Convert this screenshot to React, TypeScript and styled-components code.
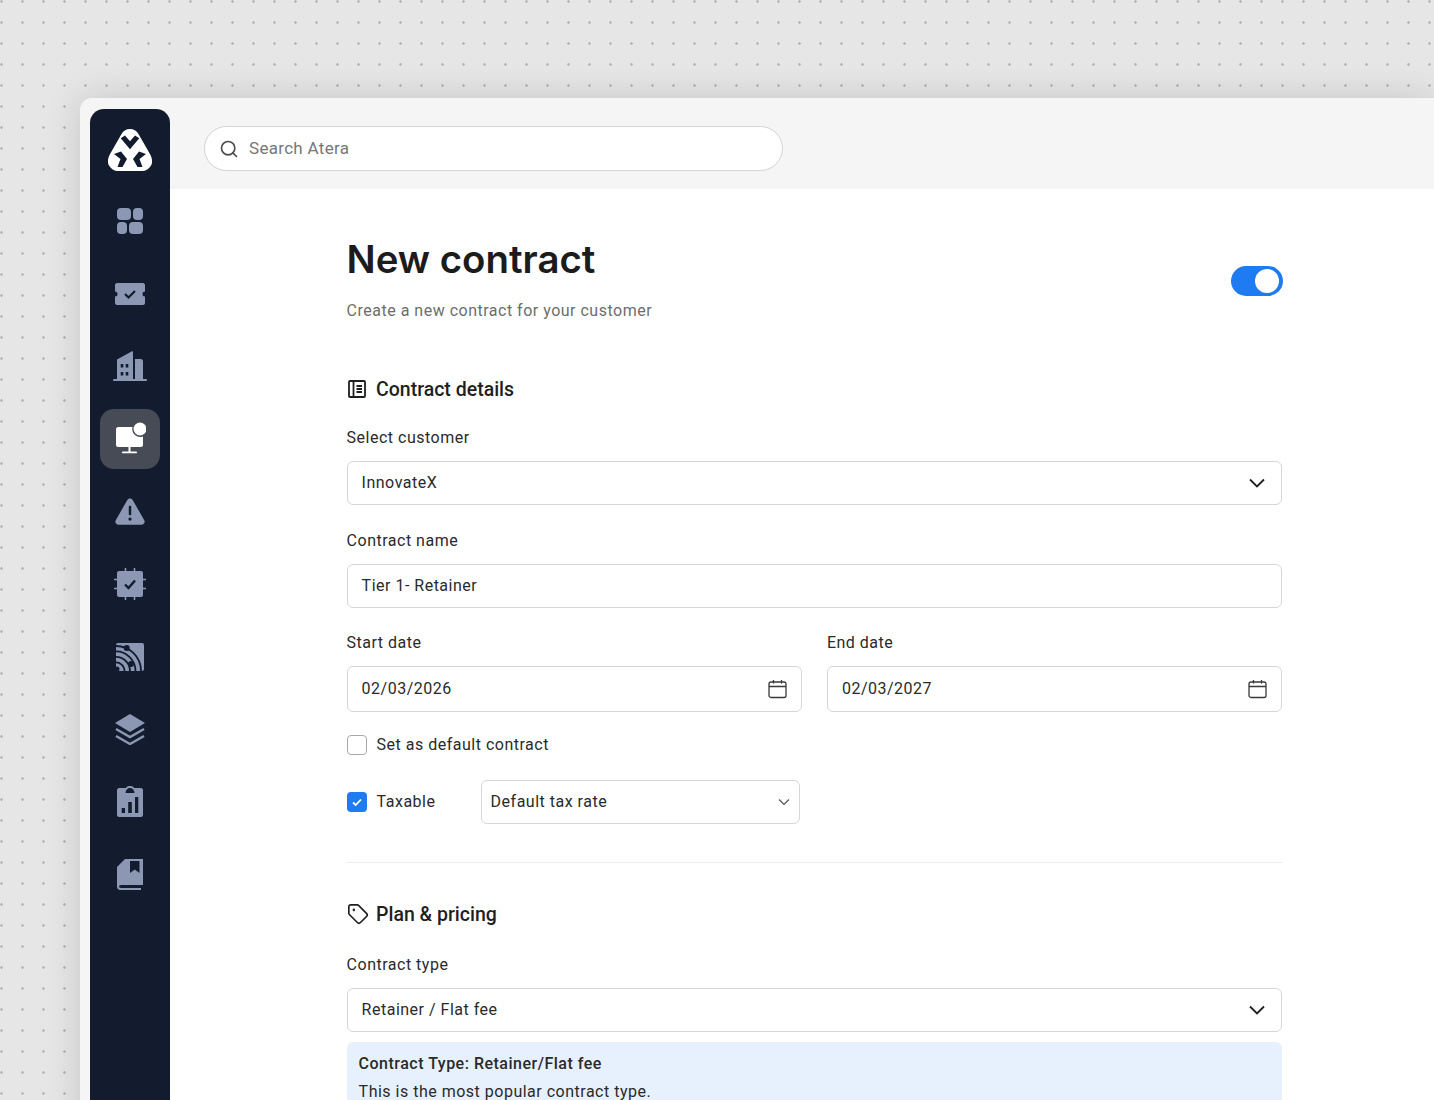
import styled, { createGlobalStyle } from 'styled-components';
import { Search, Tag } from 'lucide-react';
import type { ReactNode } from 'react';

const SIDEBAR_ICON = '#8b97b3';
const NAVY = '#131c2e';

const GlobalStyle = createGlobalStyle`
  html, body {
    margin: 0;
    padding: 0;
  }
  body {
    font-family: Roboto, "Liberation Sans", sans-serif;
    color: #1f1f1f;
    letter-spacing: 0.5px;
  }
  * {
    box-sizing: border-box;
  }
`;

const LogoIcon = () => (
  <svg width="44" height="44" viewBox="0 0 44 44">
    <path
      d="M22 0C25.500 0 28.500 1.500 30.500 5L42.500 26C44.500 30 44.500 34 43 36.500C41 40 38 42 34 42H10C6 42 3 40 1 36.500C-.5 34-.5 30 1.500 26L13.500 5C15.500 1.500 18.500 0 22 0z"
      fill="#fff"
    />
    <g fill={NAVY}>
      <path d="M12.700 9.300L17 6.500l5 5.700 5-5.700 4.300 2.800L22 20.300z" />
      <path d="M6 25l7-2.500 6 7.500-4.500 8H9.500l3-8z" />
      <path d="M38 25l-7-2.500-6 7.500 4.500 8h5l-3-8z" />
    </g>
  </svg>
);

const DashboardIcon = () => (
  <svg width="28" height="28" viewBox="0 0 28 28" fill={SIDEBAR_ICON}>
    <rect x="1" y="1" width="14" height="12" rx="4" />
    <rect x="17" y="1" width="10" height="12" rx="4" />
    <rect x="1" y="15" width="10" height="12" rx="4" />
    <rect x="13" y="15" width="14" height="12" rx="4" />
  </svg>
);

const TicketIcon = () => (
  <svg width="32" height="22" viewBox="0 0 32 22">
    <path
      d="M3 0h26c1 0 2 1 2 2v6.500a2.500 2.500 0 0 0 0 5V20c0 1-1 2-2 2H3c-1 0-2-1-2-2v-6.500a2.500 2.500 0 0 0 0-5V2c0-1 1-2 2-2z"
      fill={SIDEBAR_ICON}
    />
    <path d="M11 11l3.500 3.500L21 8" fill="none" stroke={NAVY} strokeWidth="2.200" />
  </svg>
);

const BuildingIcon = () => (
  <svg width="34" height="31" viewBox="0 0 34 31">
    <path d="M4 29V8.500L18.500.5c.8-.4 1.500 0 1.500 1V29z" fill={SIDEBAR_ICON} />
    <path d="M22 8h6c1 0 2 1 2 2v19h-8z" fill={SIDEBAR_ICON} />
    <rect y="28" width="34" height="2" rx="1" fill={SIDEBAR_ICON} />
    <g fill={NAVY}>
      <rect x="7.700" y="13" width="2.600" height="3.500" />
      <rect x="12.700" y="13" width="2.600" height="3.500" />
      <rect x="7.700" y="21" width="2.600" height="3.500" />
      <rect x="12.700" y="21" width="2.600" height="3.500" />
    </g>
  </svg>
);

const MonitorIcon = () => (
  <svg width="32" height="34" viewBox="0 0 32 34" fill="#fff">
    <path d="M4 5h14.500A8 8 0 0 0 29 14.500V23c0 1-1 2-2 2H4c-1 0-2-1-2-2V7c0-1 1-2 2-2z" />
    <circle cx="26" cy="7" r="6.500" />
    <rect x="14.500" y="25" width="2" height="5" />
    <rect x="8" y="29.500" width="15" height="1.800" rx="0.900" />
  </svg>
);

const AlertIcon = () => (
  <svg width="32" height="29" viewBox="0 0 34 30">
    <path
      d="M14 3c1.500-2.500 4.500-2.500 6 0l12 21c1.500 2.500 0 5-3 5H5c-3 0-4.500-2.500-3-5z"
      fill={SIDEBAR_ICON}
    />
    <rect x="15.700" y="9" width="2.600" height="10" rx="1" fill={NAVY} />
    <circle cx="17" cy="23" r="1.700" fill={NAVY} />
  </svg>
);

const ChipIcon = () => (
  <svg width="32" height="32" viewBox="0 0 32 32">
    <rect x="3" y="3" width="26" height="26" rx="2" fill={SIDEBAR_ICON} />
    <path
      d="M11.500 0v3M20.500 0v3M11.500 29v3M20.500 29v3M0 11.500h3M0 20.500h3M29 11.500h3M29 20.500h3"
      stroke={SIDEBAR_ICON}
      strokeWidth="1.600"
    />
    <path d="M11 16.500l3.500 3.500L21 12.500" fill="none" stroke={NAVY} strokeWidth="2.400" />
  </svg>
);

const FeedIcon = () => (
  <svg width="30" height="30" viewBox="0 0 30 30">
    <rect x="1" y="1" width="28" height="28" rx="2" fill={SIDEBAR_ICON} />
    <g fill="none" stroke={NAVY} strokeWidth="1.800">
      <path d="M0 4A25 25 0 0 1 26 29" />
      <path d="M0 9.500A19.500 19.500 0 0 1 20.500 29" />
      <path d="M0 15A14 14 0 0 1 15 29" />
      <path d="M0 20.500A8.500 8.500 0 0 1 9.500 29" />
    </g>
    <circle cx="11.700" cy="6" r="3" fill={NAVY} />
    <circle cx="16" cy="22" r="3" fill={NAVY} />
    <circle cx="2" cy="27" r="2.500" fill={NAVY} />
  </svg>
);

const LayersIcon = () => (
  <svg width="32" height="32" viewBox="0 0 32 32">
    <path d="M16 1l15 9-15 9-15-9z" fill={SIDEBAR_ICON} />
    <path d="M2 16l14 8 14-8M2 23l14 8 14-8" fill="none" stroke={SIDEBAR_ICON} strokeWidth="2.400" />
  </svg>
);

const ReportIcon = () => (
  <svg width="26" height="31" viewBox="0 0 26 31">
    <path
      d="M2 2h7c.5-1.500 2-2 4-2s3.500.5 4 2h7c1 0 2 1 2 2v25c0 1-1 2-2 2H2c-1 0-2-1-2-2V4c0-1 1-2 2-2z"
      fill={SIDEBAR_ICON}
    />
    <path d="M8.500 7c0-3 2-5 4.500-5s4.500 2 4.500 5z" fill={NAVY} />
    <rect x="4.700" y="22" width="3.300" height="5" fill={NAVY} />
    <rect x="11.200" y="16" width="3.600" height="11" fill={NAVY} />
    <rect x="18" y="11" width="3.300" height="16" fill={NAVY} />
  </svg>
);

const BookIcon = () => (
  <svg width="26" height="31" viewBox="0 0 26 31">
    <path
      d="M8 0H26V26H4C2.800 26 2 26.800 2 27.500S2.800 29 4 29H24V31H3C1.500 31 0 29.500 0 28V8z"
      fill={SIDEBAR_ICON}
    />
    <path d="M13 2h9.500v12l-4.750-3.500L13 14z" fill={NAVY} />
  </svg>
);

const DetailsIcon = () => (
  <svg width="20" height="20" viewBox="0 0 20 20" fill="none" stroke="#1f1f1f" strokeWidth="1.800">
    <rect x="2" y="2" width="16" height="16" rx="1" />
    <path d="M6.500 2v16M9.500 7h5.500M9.500 10h5.500M9.500 13h5.500" />
  </svg>
);

const CalendarIcon = () => (
  <svg width="20" height="20" viewBox="0 0 20 20" fill="none" stroke="#3a3a3a" strokeWidth="1.300">
    <rect x="2" y="3" width="17" height="15.500" rx="2" />
    <path d="M2 7.500h17M6.500 1v3.500M14.500 1v3.500" />
  </svg>
);

const ChevronIcon = ({ size = 20, color = '#1f1f1f' }: { size?: number; color?: string }) => (
  <svg width={size} height={size} viewBox="0 0 20 20" fill="none" stroke={color} strokeWidth="1.800">
    <path d="M3 6.500l7 7 7-7" />
  </svg>
);

const navItems = [
  { id: 'dashboard', icon: <DashboardIcon />, height: 72 },
  { id: 'tickets', icon: <TicketIcon />, height: 73 },
  { id: 'customers', icon: <BuildingIcon />, height: 72 },
  { id: 'devices', icon: <MonitorIcon />, height: 74, active: true },
  { id: 'alerts', icon: <AlertIcon />, height: 71 },
  { id: 'patches', icon: <ChipIcon />, height: 74 },
  { id: 'network', icon: <FeedIcon />, height: 72 },
  { id: 'apps', icon: <LayersIcon />, height: 72 },
  { id: 'reports', icon: <ReportIcon />, height: 72 },
  { id: 'kb', icon: <BookIcon />, height: 74 },
];

const SelectField = ({ value }: { value: string }) => (
  <Control>
    <span>{value}</span>
    <ChevronIcon />
  </Control>
);

const Section = ({ icon, title }: { icon: ReactNode; title: string }) => (
  <SectionTitle>
    {icon}
    <h2>{title}</h2>
  </SectionTitle>
);

const App = () => {
  return (
    <Page>
      <GlobalStyle />
      <Window>
        <Sidebar>
          <LogoSlot>
            <LogoIcon />
          </LogoSlot>
          {navItems.map((item) => (
            <NavSlot key={item.id} $height={item.height}>
              <NavButton $active={item.active}>{item.icon}</NavButton>
            </NavSlot>
          ))}
        </Sidebar>
        <Main>
          <TopBar>
            <SearchBox>
              <Search size={20} color="#4d4d4d" strokeWidth={2} />
              <span>Search Atera</span>
            </SearchBox>
          </TopBar>
          <Content>
            <Header>
              <div>
                <Title>New contract</Title>
                <Subtitle>Create a new contract for your customer</Subtitle>
              </div>
              <Toggle>
                <Knob />
              </Toggle>
            </Header>

            <Section icon={<DetailsIcon />} title="Contract details" />
            <Label $top={25}>Select customer</Label>
            <SelectField value="InnovateX" />
            <Label $top={26}>Contract name</Label>
            <Control>
              <span>Tier 1- Retainer</span>
            </Control>
            <DateRow>
              <div>
                <Label $top={1}>Start date</Label>
                <Control $tall>
                  <span>02/03/2026</span>
                  <CalendarIcon />
                </Control>
              </div>
              <div>
                <Label $top={1}>End date</Label>
                <Control $tall>
                  <span>02/03/2027</span>
                  <CalendarIcon />
                </Control>
              </div>
            </DateRow>
            <CheckRow>
              <CheckBox />
              <span>Set as default contract</span>
            </CheckRow>
            <TaxRow>
              <CheckRow>
                <CheckBox $checked>
                  <svg width="12" height="12" viewBox="0 0 12 12" fill="none" stroke="#fff" strokeWidth="1.800">
                    <path d="M2 6.500l2.700 2.500L10 3.500" />
                  </svg>
                </CheckBox>
                <span>Taxable</span>
              </CheckRow>
              <TaxSelect>
                <span>Default tax rate</span>
                <ChevronIcon size={14} color="#555" />
              </TaxSelect>
            </TaxRow>
            <Divider />

            <Section icon={<TagIcon size={22} color="#1f1f1f" strokeWidth={1.8} />} title="Plan & pricing" />
            <Label $top={27}>Contract type</Label>
            <SelectField value="Retainer / Flat fee" />
            <InfoBox>
              <strong>Contract Type: Retainer/Flat fee</strong>
              <p>This is the most popular contract type.</p>
            </InfoBox>
          </Content>
        </Main>
      </Window>
    </Page>
  );
};

const Page = styled.div`
  height: 1100px;
  overflow: hidden;
  padding: 98px 0 0 80px;
  background-color: #e6e6e6;
  background-image: radial-gradient(circle, #b8b8b8 1.100px, transparent 1.500px);
  background-size: 21px 21px;
  background-position: -9px -9px;
`;

const Window = styled.div`
  display: flex;
  align-items: flex-start;
  height: 1100px;
  padding-left: 10px;
  background: #f5f5f5;
  border-top-left-radius: 12px;
  box-shadow: 0 0 36px rgba(0, 0, 0, 0.14);
`;

const Sidebar = styled.nav`
  flex: 0 0 80px;
  height: 1000px;
  margin-top: 11px;
  background: ${NAVY};
  border-radius: 14px 14px 0 0;
`;

const LogoSlot = styled.div`
  display: flex;
  justify-content: center;
  padding-top: 20px;
  height: 76px;
`;

const NavSlot = styled.div<{ $height: number }>`
  display: flex;
  align-items: center;
  justify-content: center;
  height: ${({ $height }) => $height}px;
`;

const NavButton = styled.div<{ $active?: boolean }>`
  display: flex;
  align-items: center;
  justify-content: center;
  width: 60px;
  height: 60px;
  border-radius: 14px;
  background: ${({ $active }) => ($active ? '#474b55' : 'transparent')};
`;

const Main = styled.main`
  flex: 1;
  min-width: 0;
  height: 100%;
  background: #fff;
`;

const TopBar = styled.header`
  height: 91px;
  padding: 28px 0 0 34px;
  background: #f5f5f5;
`;

const SearchBox = styled.div`
  display: flex;
  align-items: center;
  gap: 10px;
  width: 579px;
  height: 45px;
  padding: 0 14px;
  background: #fff;
  border: 1px solid #d4d4d4;
  border-radius: 23px;
  font-size: 17px;
  letter-spacing: 0.3px;
  color: #777;
  span {
    padding-bottom: 2px;
  }
`;

const Content = styled.div`
  width: 935.6px;
  margin-left: 176.6px;
  padding-top: 44px;
`;

const Header = styled.div`
  display: flex;
  align-items: center;
  justify-content: space-between;
  margin-bottom: 53px;
`;

const Title = styled.h1`
  margin: 0;
  font-family: Inter, Roboto, sans-serif;
  font-size: 38.4px;
  line-height: 52px;
  font-weight: 600;
  letter-spacing: 0;
  color: #1c1c1c;
`;

const Subtitle = styled.p`
  margin: 15px 0 0;
  font-size: 16px;
  line-height: 22px;
  color: #6d6d6d;
`;

const Toggle = styled.div`
  display: flex;
  align-items: center;
  justify-content: flex-end;
  width: 52px;
  height: 30px;
  margin: 6px -1px 0 0;
  padding-right: 4px;
  border-radius: 15px;
  background: #1f7bf2;
`;

const Knob = styled.div`
  width: 24px;
  height: 24px;
  border-radius: 50%;
  background: #fff;
`;

const SectionTitle = styled.div`
  display: flex;
  align-items: center;
  gap: 9.4px;
  height: 28px;
  h2 {
    margin: 0;
    font-size: 19.5px;
    font-weight: 500;
    letter-spacing: 0;
    color: #1f1f1f;
  }
`;

const TagIcon = styled(Tag)`
  margin-right: -2px;
`;

const Label = styled.div<{ $top?: number }>`
  margin-top: ${({ $top }) => $top ?? 0}px;
  margin-bottom: 13px;
  font-size: 16px;
  line-height: 20px;
  color: #2a2a2a;
`;

const Control = styled.div<{ $tall?: boolean }>`
  display: flex;
  align-items: center;
  justify-content: space-between;
  height: ${({ $tall }) => ($tall ? 46 : 44)}px;
  padding: 0 14px;
  background: #fff;
  border: 1px solid #d6d6d6;
  border-radius: 6px;
  font-size: 16px;
  color: #2a2a2a;
  span {
    padding-bottom: 2px;
  }
`;

const DateRow = styled.div`
  display: grid;
  grid-template-columns: 1fr 1fr;
  gap: 25px;
  margin-top: 24px;
`;

const CheckRow = styled.label`
  display: flex;
  align-items: center;
  gap: 10px;
  height: 20px;
  margin-top: 23px;
  font-size: 16px;
  color: #2a2a2a;
  span:last-child {
    padding-bottom: 2px;
  }
`;

const CheckBox = styled.span<{ $checked?: boolean }>`
  display: flex;
  align-items: center;
  justify-content: center;
  flex: 0 0 20px;
  width: 20px;
  height: 20px;
  border-radius: 4px;
  border: ${({ $checked }) => ($checked ? 'none' : '1.500px solid #a9a9a9')};
  background: ${({ $checked }) => ($checked ? '#1f7bf2' : '#fff')};
`;

const TaxRow = styled.div`
  display: flex;
  align-items: center;
  gap: 44px;
  margin-top: 25px;
  ${CheckRow} {
    margin-top: 0;
    width: 90px;
  }
`;

const TaxSelect = styled.div`
  display: flex;
  align-items: center;
  justify-content: space-between;
  width: 319px;
  height: 44px;
  padding: 0 8px 0 9px;
  border: 1px solid #d6d6d6;
  border-radius: 6px;
  font-size: 16px;
  color: #2a2a2a;
  span {
    padding-bottom: 2px;
  }
`;

const Divider = styled.hr`
  margin: 38px 0 37px;
  border: 0;
  border-top: 1px solid #ececec;
`;

const InfoBox = styled.div`
  margin-top: 10px;
  padding: 12px 12px 30px;
  background: #e7f1fd;
  border-radius: 6px 6px 0 0;
  font-size: 16px;
  color: #2a2a2a;
  strong {
    display: block;
    font-weight: 500;
    line-height: 20px;
  }
  p {
    margin: 8px 0 0;
    line-height: 20px;
  }
`;

export default App;
